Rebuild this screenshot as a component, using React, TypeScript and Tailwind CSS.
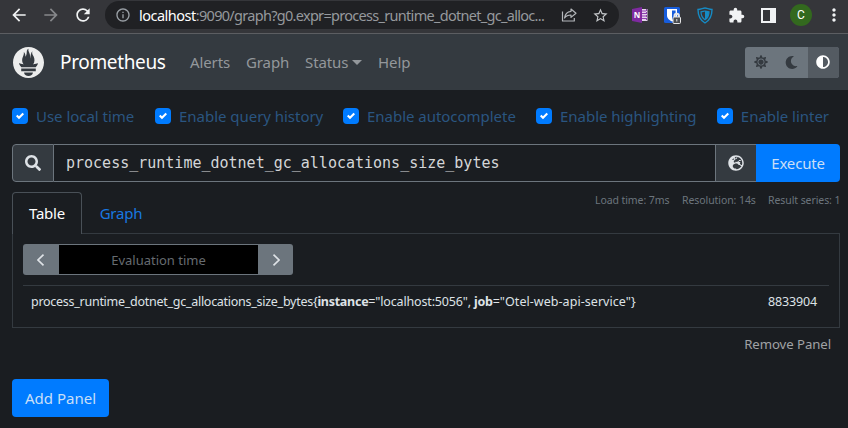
import React from "react";
import { FaSearch, FaGlobeEurope, FaSun, FaMoon, FaAdjust } from "react-icons/fa";
import { MdArrowBack, MdArrowForward, MdRefresh, MdInfoOutline, MdStarBorder, MdExtension, MdMoreVert } from "react-icons/md";
import { SiPrometheus } from "react-icons/si";

function ShareIcon() {
  return (
    <svg width="16" height="16" viewBox="0 0 16 16" fill="none" stroke="#b4b7bb" strokeWidth="1.2" strokeLinejoin="round">
      <path d="M1.500 4.500V14h11.800v-3" />
      <path d="M10 2l5 4.200-5 4.200V8C7 8 5 9 3.600 11 4 7.300 6.500 4.700 10 4.300z" />
    </svg>
  );
}

function OneNoteIcon() {
  return (
    <svg width="17" height="16" viewBox="0 0 17 16">
      <path d="M9 2h6.500v12H9z" fill="#e6d3ee" />
      <path d="M10 4h4M10 6.500h4M10 9h4M10 11.500h4" stroke="#8d3fae" strokeWidth="1" />
      <path d="M14.500 2v12" stroke="#8d3fae" strokeWidth="1" strokeDasharray="2 1" />
      <path d="M0 2l10-2v16L0 14z" fill="#7f2aa0" />
      <text x="1.800" y="11" fill="#fff" fontSize="8" fontWeight="700" className="font-['Open_Sans',sans-serif]">N</text>
    </svg>
  );
}

function BitwardenIcon() {
  return (
    <svg width="17" height="17" viewBox="0 0 17 17">
      <rect width="16" height="16" rx="1.500" fill="#175ddc" />
      <path d="M3 2h10v6.500c0 3-2.500 4.700-5 6-2.500-1.300-5-3-5-6z" fill="#fff" />
      <path d="M8 3.500h3.600v5c0 2-1.700 3.200-3.600 4.300z" fill="#175ddc" />
      <path d="M10.500 10.500V9a2.200 2.200 0 0 1 4.400 0v1.500" fill="none" stroke="#e6e6e6" strokeWidth="2" />
      <rect x="9" y="10" width="7.500" height="6.500" rx="1" fill="#4a4d51" stroke="#e6e6e6" strokeWidth="1" />
      <path d="M12.800 12v2.500" stroke="#e6e6e6" />
    </svg>
  );
}

function ShieldIcon() {
  return (
    <svg width="16" height="17" viewBox="0 0 16 17" fill="none" stroke="#168bc4">
      <path d="M1 2.500C4 2.500 6 1 8 1s4 1.500 7 1.500C15 9 12.500 13.500 8 16 3.500 13.500 1 9 1 2.500z" strokeWidth="1.400" />
      <path d="M4 4.800c1.800 0 2.800-.8 4-.8s2.200.8 4 .8c0 3.600-1.500 6.300-4 8-2.500-1.700-4-4.400-4-8z" strokeWidth="1.200" />
      <path d="M8 4v8.800c2.500-1.700 4-4.400 4-8C10.200 4.800 9.200 4 8 4z" fill="#168bc4" stroke="none" />
    </svg>
  );
}

function BrowserBar() {
  return (
    <div className="flex h-[33px] shrink-0 items-center bg-[#35363a] pb-[3px]">
      <MdArrowBack className="ml-[9px] size-5 text-[#f1f3f4]" />
      <MdArrowForward className="ml-3 size-5 text-[#86888b]" />
      <MdRefresh className="ml-3 size-5 text-[#f1f3f4]" />
      <div className="ml-3 flex h-[28px] w-[514px] items-center rounded-full bg-[#202124] pl-[10px]">
        <MdInfoOutline className="size-4 text-[#9aa0a6]" />
        <div className="ml-2 w-[409px] whitespace-nowrap text-[14.500px] tracking-[-0.7px] text-[#96999d]">
          <span className="tracking-[-0.500px] text-white">localhost</span>:9090/graph?g0.expr=process_runtime_dotnet_gc_alloc...
        </div>
        <div className="ml-[13px] flex items-center gap-[15px]">
          <ShareIcon />
          <MdStarBorder className="size-[17px] text-[#c4c7ca]" />
        </div>
      </div>
      <div className="ml-[13px] flex items-center">
        <OneNoteIcon />
        <span className="ml-[15px]"><BitwardenIcon /></span>
        <span className="ml-[16px]"><ShieldIcon /></span>
        <MdExtension className="ml-[15px] size-[17px] text-[#f1f3f4]" />
        <svg className="ml-[16px]" width="15" height="15" viewBox="0 0 15 15">
          <path d="M1 1h13v13H1z" fill="none" stroke="#f1f3f4" strokeWidth="2" />
          <path d="M9 1h5v13H9z" fill="#f1f3f4" />
        </svg>
        <span className="ml-[14px] flex size-[22px] items-center justify-center rounded-full bg-[#33691e] font-['Roboto',sans-serif] text-xs text-white">C</span>
        <MdMoreVert className="ml-[12px] size-5 text-[#f1f3f4]" />
      </div>
    </div>
  );
}

function NavBar() {
  return (
    <nav className="flex h-14 shrink-0 items-center bg-[#343a40] text-[#93979b]">
      <SiPrometheus className="ml-[13px] size-[31px] text-[#eceded]" />
      <span className="ml-4 w-[106px] whitespace-nowrap text-[19px] tracking-[-0.35px] text-white">Prometheus</span>
      <span className="ml-6 w-[40px] whitespace-nowrap tracking-[-0.1px]">Alerts</span>
      <span className="ml-4 w-[43px] whitespace-nowrap tracking-[-0.1px]">Graph</span>
      <span className="ml-4 w-[43px] whitespace-nowrap tracking-[-0.1px]">Status</span>
      <span className="ml-1 border-x-[5px] border-t-[5px] border-x-transparent border-t-[#93979b]" />
      <span className="ml-4 whitespace-nowrap tracking-[-0.1px]">Help</span>
      <div className="mr-[9px] ml-auto flex h-[31px] w-[94px] overflow-hidden rounded-[3px] bg-[#6c757d] text-sm text-[#343a40]">
        <span className="flex flex-1 items-center justify-center"><FaSun /></span>
        <span className="flex flex-1 items-center justify-center"><FaMoon className="size-[13px]" /></span>
        <span className="flex flex-1 items-center justify-center bg-[#545b62] text-white"><FaAdjust /></span>
      </div>
    </nav>
  );
}

function Check({ label, width }: { label: string; width: string }) {
  return (
    <div className={"flex shrink-0 items-center " + width}>
      <span className="flex size-4 items-center justify-center rounded bg-[#007bff]">
        <svg width="8" height="8" viewBox="0 0 8 8"><path fill="#fff" d="M6.564.75l-3.590 3.612-1.538-1.550L0 4.260l2.974 2.990L8 2.193z" /></svg>
      </span>
      <span className="ml-2 whitespace-nowrap tracking-[-0.03px] text-[#2a5580]">{label}</span>
    </div>
  );
}

export default function App() {
  return (
    <div className="flex h-[428px] w-[848px] flex-col overflow-hidden bg-[#1a1d21] font-['Noto_Sans','Open_Sans',sans-serif] text-[15px] leading-6 text-[#dee2e6]">
      <BrowserBar />
      <div className="h-px shrink-0 bg-[#5c5e62]" />
      <NavBar />
      <main className="flex flex-col pr-2 pl-3">
        <div className="mt-[14px] flex h-6 items-center">
          <Check label="Use local time" width="w-[143px]" />
          <Check label="Enable query history" width="w-[188px]" />
          <Check label="Enable autocomplete" width="w-[193px]" />
          <Check label="Enable highlighting" width="w-[181px]" />
          <Check label="Enable linter" width="w-[112px]" />
        </div>

        <div className="mt-4 flex h-[38px]">
          <span className="flex w-[42px] items-center justify-center rounded-l border border-[#6c757d] bg-[#343a40]"><FaSearch className="size-4" /></span>
          <div className="flex flex-1 items-center border-y border-[#6c757d] pl-3 font-['DejaVu_Sans_Mono',monospace] text-[15px] text-[#d4d6d8]">
            process_runtime_dotnet_gc_allocations_size_bytes
          </div>
          <span className="flex w-[41px] items-center justify-center border border-r-0 border-[#6c757d] bg-[#343a40]"><FaGlobeEurope className="size-4" /></span>
          <button className="w-[84px] whitespace-nowrap rounded-r bg-[#007bff] tracking-[-0.2px] text-[#c9dff7]">Execute</button>
        </div>

        <div className="mt-[10px] flex h-[41px]">
          <div className="relative z-10 -mb-px h-[42px] w-[70px] rounded-t border border-b-0 border-[#495057] bg-[#1a1d21] pt-2 text-center tracking-[-0.2px] text-white">Table</div>
          <div className="w-[78px] pt-[9px] text-center tracking-[-0.2px] text-[#1878e0]">Graph</div>
          <div className="-mt-[1px] ml-auto flex gap-3 whitespace-nowrap text-[10.500px] leading-[18px] tracking-[-0.08px] text-[#6c757d]">
            <span className="w-[75px]">Load time: 7ms</span>
            <span className="w-[74px]">Resolution: 14s</span>
            <span className="w-[72px]">Result series: 1</span>
          </div>
        </div>

        <div className="h-[95px] border border-[#343a40] px-[10px] pt-[10px]">
          <div className="flex h-[31px] w-[270px] overflow-hidden rounded-[3px] bg-[#6c757d]">
            <span className="flex w-9 items-center justify-center">
              <svg width="8" height="12" viewBox="0 0 8 12" fill="none" stroke="#dee2e6" strokeWidth="1.700"><path d="M6.500 .7L1 6 6.500 11.300" /></svg>
            </span>
            <span className="my-px flex-1 bg-black text-center text-[13px] leading-[30px] text-[#666b70]">Evaluation time</span>
            <span className="flex w-[35px] items-center justify-center">
              <svg width="8" height="12" viewBox="0 0 8 12" fill="none" stroke="#dee2e6" strokeWidth="1.700"><path d="M1.500 .7L7 6 1.500 11.300" /></svg>
            </span>
          </div>
          <div className="mt-[10px] flex justify-between border-t border-[#343a40] pr-[12px] pl-2 text-[12.500px] leading-[31px]">
            <span className="whitespace-nowrap tracking-[-0.27px]">{"process_runtime_dotnet_gc_allocations_size_bytes{"}<b>instance</b><span className="tracking-[-0.16px]">="localhost:5056", </span><b>job</b><span className="tracking-[0.05px]">="Otel-web-api-service"{"}"}</span></span>
            <span className="tracking-[-0.15px]">8833904</span>
          </div>
        </div>

        <div className="mt-1 self-end pr-[9px] text-[13.200px] tracking-[-0.07px] text-[#a0a2a5]">Remove Panel</div>
        <button className="mt-[23px] h-[38px] w-[97px] whitespace-nowrap rounded bg-[#007bff] text-[#c9dff7]">Add Panel</button>
      </main>
    </div>
  );
}
